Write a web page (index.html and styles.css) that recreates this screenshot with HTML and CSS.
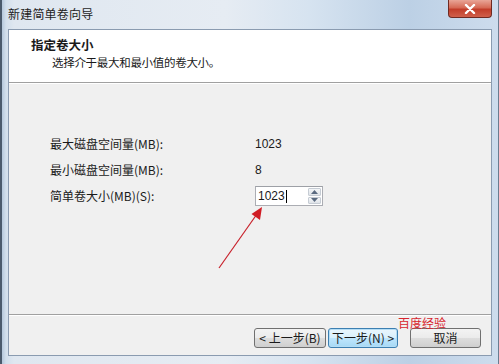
FILE: index.html
```html
<!DOCTYPE html>
<html lang="zh-CN">
<head>
<meta charset="utf-8">
<title>新建简单卷向导</title>
<link rel="stylesheet" href="styles.css">
</head>
<body>
<div class="window">
  <div class="titlebar">
    <span class="title">新建简单卷向导</span>
    <span class="close">
      <svg width="14" height="10" viewBox="0 0 14 10"><path d="M3 1 L11 9 M11 1 L3 9" stroke="#fff" stroke-width="2.4" stroke-linecap="round"/></svg>
    </span>
  </div>
  <div class="content">
    <div class="header">
      <div class="h-title">指定卷大小</div>
      <div class="h-sub">选择介于最大和最小值的卷大小。</div>
    </div>
    <div class="body">
      <div class="grid">
        <div class="label">最大磁盘空间量(MB):</div>
        <div class="value">1023</div>
        <div class="label">最小磁盘空间量(MB):</div>
        <div class="value">8</div>
        <div class="label">简单卷大小(MB)(S):</div>
        <div class="value">
          <div class="spin">
            <div class="spin-text">1023<span class="caret"></span></div>
            <div class="spin-btns">
              <div class="sb"><svg width="7" height="4" viewBox="0 0 7 4"><path d="M0 4 L3.5 0 L7 4Z" fill="#5a6a80"/></svg></div>
              <div class="sb"><svg width="7" height="4" viewBox="0 0 7 4"><path d="M0 0 L3.5 4 L7 0Z" fill="#5a6a80"/></svg></div>
            </div>
          </div>
        </div>
      </div>
    </div>
    <div class="footer">
      <div class="buttons">
        <button class="btn">&lt; 上一步(B)</button>
        <button class="btn default">下一步(N) &gt;</button>
        <button class="btn cancel">取消</button>
      </div>
      <span class="watermark">百度经验</span>
    </div>
  </div>
  <svg class="arrow" width="60" height="80" viewBox="0 0 60 80">
    <path d="M7 68 L45 14" stroke="#c8202a" stroke-width="1.2" fill="none"/>
    <path d="M50 7 L48 20 L39.5 14 Z" fill="#d01c24"/>
  </svg>
</div>
</body>
</html>
```
FILE: styles.css
```css
* { box-sizing: border-box; }
html, body { margin: 0; padding: 0; }
body {
  width: 499px;
  height: 364px;
  overflow: hidden;
  font-family: "Noto Sans CJK SC", "Noto Sans", sans-serif;
  font-size: 12px;
  color: #1a1a1a;
}
.window {
  position: relative;
  width: 499px;
  height: 364px;
  display: flex;
  flex-direction: column;
  background: linear-gradient(to right, #b5c8dc 0px, #d2dfec 4px, #dfe7f0 12px, #e6ecf3 45%, #d6e3f0 62%, #bcd0e5 82%, #cddced 100%);
  border-left: 2px solid #4a5a6c;
  border-right: 1px solid #6a7c90;
  padding-bottom: 8px;
}
.titlebar {
  height: 29px;
  display: flex;
  align-items: flex-start;
  justify-content: space-between;
  padding-left: 6px;
  padding-right: 6px;
}
.title {
  margin-top: 5px;
  font-size: 12px;
  color: #1e1e1e;
  letter-spacing: 0.2px;
}
.close {
  width: 44px;
  height: 18px;
  display: flex;
  align-items: center;
  justify-content: center;
  background: linear-gradient(to bottom, #e9a597 0%, #d66a56 45%, #c23d2a 55%, #d0604b 100%);
  border: 1px solid #6f2a22;
  border-top: none;
  border-radius: 0 0 4px 4px;
}
.content {
  flex: 1;
  margin: 0 6px 0 6px;
  display: flex;
  flex-direction: column;
  border: 1px solid #8a9bb0;
  background: #f0f0f0;
}
.header {
  height: 53px;
  background: #fff;
  border-bottom: 1px solid #a0a0a0;
  box-shadow: 0 1px 0 #fff;
  padding: 6px 0 0 22px;
}
.h-title {
  font-weight: bold;
  font-size: 12.5px;
  line-height: 18px;
}
.h-sub {
  margin-left: 21px;
  line-height: 17px;
  font-size: 11.5px;
  letter-spacing: -0.3px;
}
.body {
  flex: 1;
  padding: 48px 0 0 41px;
  border-bottom: 1px solid #a0a0a0;
  box-shadow: 0 1px 0 #fff;
}
.grid {
  display: grid;
  grid-template-columns: 205px auto;
  grid-auto-rows: 26px;
  align-items: center;
}
.label, .value { line-height: 18px; }
.value { font-family: "Liberation Sans", Arial, sans-serif; font-size: 12px; }
.spin {
  width: 68px;
  height: 20px;
  display: flex;
  border: 1px solid #abadb3;
  border-top-color: #9da0a6;
  background: #fff;
}
.spin-text {
  flex: 1;
  padding-left: 2px;
  line-height: 18px;
  font-family: "Liberation Sans", Arial, sans-serif;
  font-size: 12px;
  display: flex;
  align-items: center;
}
.caret {
  display: inline-block;
  width: 1px;
  height: 13px;
  background: #000;
  margin-left: 1px;
}
.spin-btns {
  width: 15px;
  display: flex;
  flex-direction: column;
  padding: 1px;
  gap: 1px;
}
.sb {
  flex: 1;
  display: flex;
  align-items: center;
  justify-content: center;
  background: linear-gradient(to bottom, #f4f6f8, #dfe3e8);
  border: 1px solid #c6ccd4;
  border-radius: 1px;
}
.footer {
  height: 40px;
  position: relative;
  display: flex;
  justify-content: flex-end;
  align-items: flex-start;
  padding: 13px 10px 0 0;
}
.buttons { display: flex; }
.btn {
  height: 20px;
  width: 72px;
  padding: 0;
  font-family: "Noto Sans CJK SC", sans-serif;
  font-size: 12px;
  color: #1a1a1a;
  border: 1px solid #707070;
  border-radius: 3px;
  background: linear-gradient(to bottom, #f3f3f3 0%, #ebebeb 48%, #dddddd 52%, #cfcfcf 100%);
  line-height: 16px;
}
.btn.default {
  width: 70px;
  margin-left: 2px;
  border-color: #3c7fb1;
  background: linear-gradient(to bottom, #eaf6fd 0%, #d9f0fc 48%, #bee6fd 52%, #a7d9f5 100%);
  box-shadow: inset 0 0 0 1px #b4ddf5;
}
.btn.cancel {
  width: 71px;
  margin-left: 12px;
}
.watermark {
  position: absolute;
  left: 389px;
  top: 1px;
  color: #d8262e;
  font-size: 12px;
  line-height: 13px;
}
.arrow {
  position: absolute;
  left: 210px;
  top: 200px;
  pointer-events: none;
}
```
